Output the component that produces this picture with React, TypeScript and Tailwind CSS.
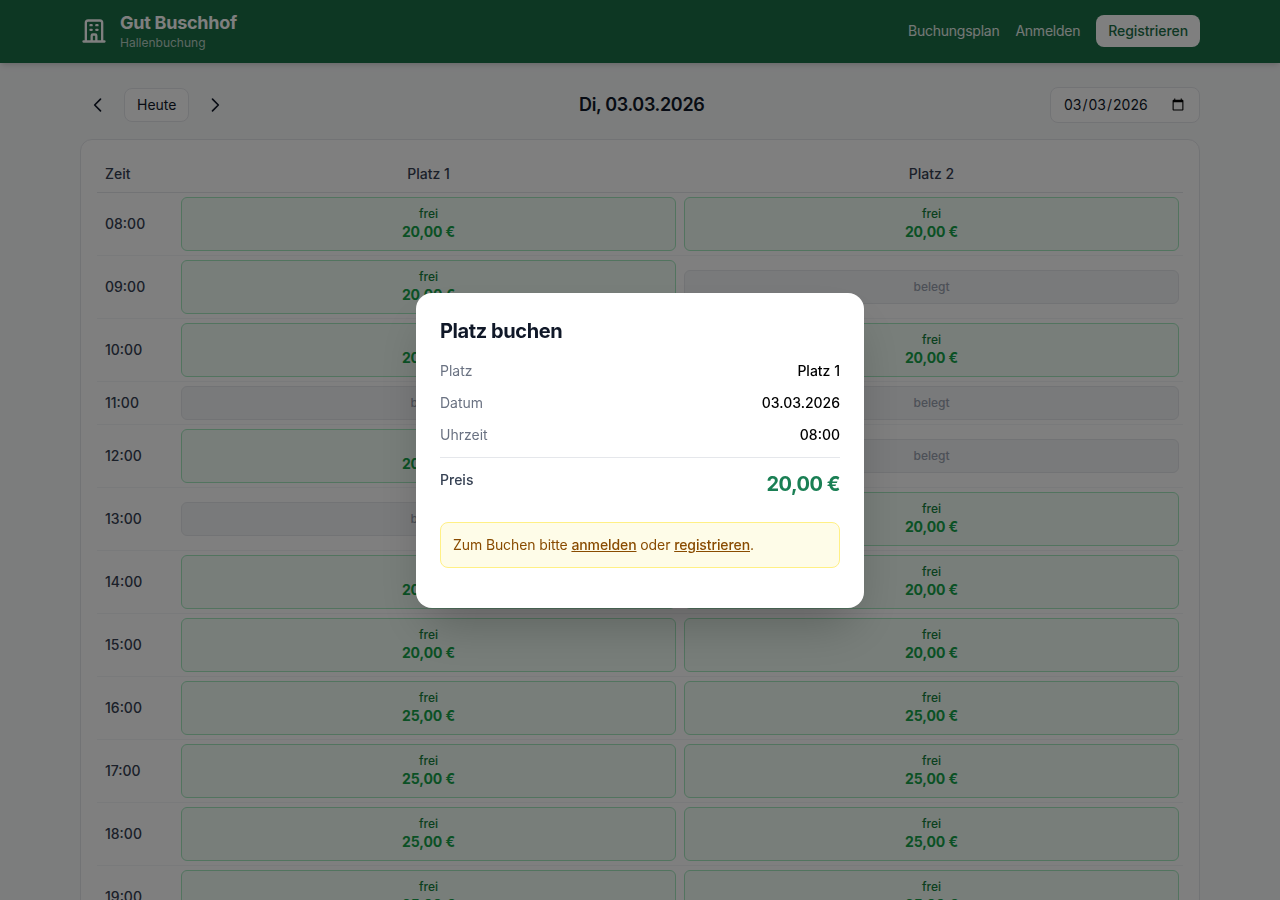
import { HiOutlineChevronLeft, HiOutlineChevronRight, HiOutlineOfficeBuilding } from "react-icons/hi";

type Slot = { free: boolean; price: string };

const rows: { time: string; slots: [boolean, boolean]; price: string }[] = [
    { time: "08:00", slots: [true, true], price: "20,00 €" },
    { time: "09:00", slots: [true, false], price: "20,00 €" },
    { time: "10:00", slots: [true, true], price: "20,00 €" },
    { time: "11:00", slots: [false, false], price: "20,00 €" },
    { time: "12:00", slots: [true, false], price: "20,00 €" },
    { time: "13:00", slots: [false, true], price: "20,00 €" },
    { time: "14:00", slots: [true, true], price: "20,00 €" },
    { time: "15:00", slots: [true, true], price: "20,00 €" },
    { time: "16:00", slots: [true, true], price: "25,00 €" },
    { time: "17:00", slots: [true, true], price: "25,00 €" },
    { time: "18:00", slots: [true, true], price: "25,00 €" },
    { time: "19:00", slots: [true, true], price: "25,00 €" },
    { time: "20:00", slots: [true, true], price: "25,00 €" },
];

function SlotCell({ free, price }: Slot) {
    return <td className="p-1 align-middle">
        {free ? (
            <button className="block w-full rounded-md border border-[#a5e8bf] bg-green-50 py-2 text-center">
                <div className="text-xs font-medium text-[#15803d]">frei</div>
                <div className="text-sm font-bold tracking-[-0.1px] text-[#16a34a]">{price}</div>
            </button>
        ) : (
            <div className="rounded-md border border-gray-200 bg-gray-100 py-2 text-center text-xs font-medium text-gray-400">belegt</div>
        )}
    </td>
}

function DetailRow({ label, value }: { label: string; value: string }) {
    return <div className="flex justify-between text-sm">
        <span className="text-gray-500">{label}</span>
        <span className="font-medium text-black">{value}</span>
    </div>
}

export default function App() {
    return <div className="h-screen overflow-hidden bg-gray-50 font-['Inter',sans-serif] text-gray-900">
        <header className="border-b border-[#1b6e47] bg-[#1b6e47] shadow-md">
            <div className="mx-auto flex h-[62px] max-w-[1120px] items-center justify-between">
                <div className="flex items-center gap-3">
                    <HiOutlineOfficeBuilding className="h-7 w-7 text-white" />
                    <div>
                        <div className="text-lg leading-6 font-bold tracking-[-0.25px] text-white">Gut Buschhof</div>
                        <div className="text-xs text-white/70">Hallenbuchung</div>
                    </div>
                </div>
                <nav className="flex items-center gap-4 text-sm">
                    <a className="tracking-[-0.25px] text-white/90">Buchungsplan</a>
                    <a className="tracking-[-0.25px] text-white/90">Anmelden</a>
                    <a className="rounded-lg bg-white px-3 py-1.5 font-medium tracking-[-0.08px] text-[#1b6e47]">Registrieren</a>
                </nav>
            </div>
        </header>

        <main className="mx-auto max-w-[1120px] pt-6">
            <div className="mb-4 flex items-center justify-between">
                <div className="flex items-center gap-2">
                    <button className="p-2 text-gray-900"><HiOutlineChevronLeft className="h-5 w-5" /></button>
                    <button className="rounded-lg border border-gray-200 bg-white px-3 py-1.5 text-sm">Heute</button>
                    <button className="p-2 text-gray-900"><HiOutlineChevronRight className="h-5 w-5" /></button>
                </div>
                <h2 className="text-lg font-semibold tracking-[-0.35px]">Di, 03.03.2026</h2>
                <input type="date" defaultValue="2026-03-03" className="w-[150px] rounded-lg border border-gray-200 bg-white px-3 py-2 text-sm leading-[18px]" />
            </div>

            <div className="rounded-xl border border-gray-200 bg-white p-4">
                <table className="w-full table-fixed border-collapse">
                    <thead>
                        <tr className="border-b border-gray-200 text-sm text-gray-700">
                            <th className="w-20 px-2 py-2 text-left font-medium">Zeit</th>
                            <th className="py-2 text-center font-medium">Platz 1</th>
                            <th className="py-2 text-center font-medium">Platz 2</th>
                        </tr>
                    </thead>
                    <tbody>
                        {rows.map((row) => (
                            <tr key={row.time} className="border-b border-gray-100">
                                <td className="px-2 text-sm font-medium text-gray-700">{row.time}</td>
                                <SlotCell free={row.slots[0]} price={row.price} />
                                <SlotCell free={row.slots[1]} price={row.price} />
                            </tr>
                        ))}
                    </tbody>
                </table>
            </div>
        </main>

        <div className="fixed inset-0 flex items-center justify-center bg-black/50">
            <div className="w-full max-w-md rounded-2xl bg-white p-6 pb-10 shadow-2xl">
                <h3 className="mb-4 text-xl font-bold tracking-[-0.4px] text-gray-900">Platz buchen</h3>
                <div className="space-y-3">
                    <DetailRow label="Platz" value="Platz 1" />
                    <DetailRow label="Datum" value="03.03.2026" />
                    <DetailRow label="Uhrzeit" value="08:00" />
                    <div className="flex items-start justify-between border-t border-gray-200 pt-3">
                        <span className="text-sm font-medium text-gray-700">Preis</span>
                        <span className="text-xl font-bold tracking-[-0.5px] text-[#1a7f54]">20,00 €</span>
                    </div>
                </div>
                <div className="mt-6 rounded-lg border border-yellow-200 bg-yellow-50 p-3 text-sm tracking-[-0.1px] text-yellow-800">
                    Zum Buchen bitte <a className="font-medium underline">anmelden</a> oder <a className="font-medium underline">registrieren</a>.
                </div>
            </div>
        </div>
    </div>
}
